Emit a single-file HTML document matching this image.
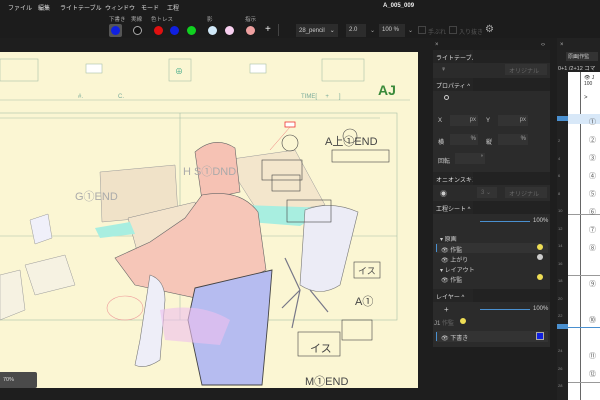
<!DOCTYPE html>
<html style="overflow:hidden;width:600px;height:400px"><head><meta charset="utf-8"><style>
*{margin:0;padding:0;box-sizing:border-box}
body{width:600px;height:400px;background:#1e1e1e;font-family:"Liberation Sans","Noto Sans CJK JP",sans-serif;color:#ccc;position:relative;overflow:hidden;font-size:6px}
.a{position:absolute;white-space:nowrap}
.dot{position:absolute;width:9px;height:9px;border-radius:50%}
.pn{position:absolute;left:433px;width:117px;background:#2b2b2b}
.hd{position:absolute;left:433px;width:117px;height:13px;background:#252525}
.hd span{position:absolute;left:3px;top:3px;color:#ddd;font-size:6px}
.hd i{position:absolute;left:40px;right:0;top:0;height:13px;background:#222}
.inp{position:absolute;background:#333;height:11px}
</style></head><body>
<div class="a" style="left:0;top:0;width:600px;height:38px;background:#1c1c1c"></div>
<div class="a" style="left:8px;top:3px;color:#ddd">ファイル</div>
<div class="a" style="left:38px;top:3px;color:#ddd">編集</div>
<div class="a" style="left:60px;top:3px;color:#ddd">ライトテーブル</div>
<div class="a" style="left:105px;top:3px;color:#ddd">ウィンドウ</div>
<div class="a" style="left:141px;top:3px;color:#ddd">モード</div>
<div class="a" style="left:167px;top:3px;color:#ddd">工程</div>
<div class="a" style="left:383px;top:3px;color:#eee;font-weight:bold">A_005_009</div>
<div class="a" style="left:109px;top:15px;color:#aaa;font-size:5.5px">下書き</div>
<div class="a" style="left:131px;top:15px;color:#aaa;font-size:5.5px">実線</div>
<div class="a" style="left:151px;top:15px;color:#aaa;font-size:5.5px">色トレス</div>
<div class="a" style="left:207px;top:15px;color:#aaa;font-size:5.5px">影</div>
<div class="a" style="left:245px;top:15px;color:#aaa;font-size:5.5px">指示</div>
<div class="a" style="left:109px;top:24px;width:13px;height:13px;background:#555;border-radius:2px"></div>
<div class="dot" style="left:111px;top:26px;background:#1020e0"></div>
<div class="dot" style="left:133px;top:26px;background:#111;border:1px solid #aaa"></div>
<div class="dot" style="left:154px;top:26px;background:#e01010"></div>
<div class="dot" style="left:170px;top:26px;background:#1020e0"></div>
<div class="dot" style="left:187px;top:26px;background:#10d020"></div>
<div class="dot" style="left:208px;top:26px;background:#d0e8f8"></div>
<div class="dot" style="left:225px;top:26px;background:#f8d0f0"></div>
<div class="dot" style="left:246px;top:26px;background:#eea0a0"></div>
<div class="a" style="left:265px;top:24px;color:#eee;font-size:10px">+</div>
<div class="a" style="left:278px;top:24px;width:1px;height:12px;background:#444"></div>
<div class="a" style="left:296px;top:24px;width:42px;height:13px;background:#2c2c2c;color:#ccc;padding:3px 3px">28_pencil &nbsp;&nbsp;⌄</div>
<div class="a" style="left:346px;top:24px;width:20px;height:13px;background:#2c2c2c;color:#ccc;padding:3px 3px">2.0</div>
<div class="a" style="left:370px;top:27px;color:#aaa">⌄</div>
<div class="a" style="left:379px;top:24px;width:26px;height:13px;background:#2c2c2c;color:#ccc;padding:3px 3px">100 %</div>
<div class="a" style="left:408px;top:27px;color:#aaa">⌄</div>
<div class="a" style="left:418px;top:26px;width:8px;height:8px;border:1px solid #444"></div>
<div class="a" style="left:428px;top:27px;color:#555">手ぶれ</div>
<div class="a" style="left:449px;top:26px;width:8px;height:8px;border:1px solid #444"></div>
<div class="a" style="left:459px;top:27px;color:#555">入り抜き</div>
<div class="a" style="left:485px;top:24px;color:#aaa;font-size:10px">⚙</div>

<div class="a" style="left:0;top:52px;width:418px;height:336px;background:#fbf6d3"></div>
<svg class="a" style="left:0;top:52px" width="418" height="336" viewBox="0 52 418 336">
<g fill="none" stroke="#a8c0a8" stroke-width="0.6">
<rect x="0" y="59" width="38" height="22"/><rect x="86" y="64" width="16" height="9" fill="#fff"/>
<rect x="169" y="59" width="22" height="22"/><rect x="250" y="64" width="16" height="9" fill="#fff"/>
<rect x="322" y="59" width="42" height="22"/>
<line x1="0" y1="100" x2="410" y2="100"/>
<rect x="-5" y="113" width="402" height="207"/>
<line x1="0" y1="118" x2="380" y2="118"/><line x1="180" y1="113" x2="180" y2="320"/>
<line x1="0" y1="236" x2="397" y2="236"/>
</g>
<text x="179" y="74" font-size="8" fill="#4a8" text-anchor="middle">⊕</text>
<text x="78" y="98" font-size="6" fill="#7a9">#.</text><text x="118" y="98" font-size="6" fill="#7a9">C.</text>
<text x="301" y="98" font-size="6" fill="#7a9">TIME[ &#160;&#160;&#160;&#160;+ &#160;&#160;&#160;&#160;&#160;]</text>
<text x="378" y="95" font-size="14" font-weight="bold" fill="#3a8a3a">AJ</text>
<polygon points="100,172 175,165 178,215 102,222" fill="#f0e2c8" stroke="#999" stroke-width="0.5"/>
<polygon points="128,218 195,202 205,250 140,262" fill="#f3e4cc" stroke="#888" stroke-width="0.5"/>
<polygon points="95,228 130,222 135,234 100,238" fill="#a8eee0"/>
<polygon points="225,160 295,150 325,205 260,215" fill="#f3e6cc" stroke="#999" stroke-width="0.5"/>
<polygon points="245,205 330,208 300,226 250,222" fill="#a8eee0"/>
<polygon points="30,220 48,214 52,238 35,244" fill="#f0f0fa" stroke="#999" stroke-width="0.5"/>
<polygon points="25,265 65,255 75,285 35,295" fill="#f6f2e2" stroke="#999" stroke-width="0.5"/>
<polygon points="0,275 20,270 25,310 0,320" fill="#f6f2e2" stroke="#999" stroke-width="0.5"/>
<path d="M305,210 Q330,200 358,212 L340,285 Q320,298 300,285 Z" fill="#ececf6" stroke="#777" stroke-width="0.6"/>
<path d="M285,258 L300,290 L282,308 M310,290 L328,312 M300,290 L292,328" stroke="#778" stroke-width="1.2" fill="none"/>
<path d="M195,152 Q215,135 235,148 L240,192 L202,200 Z" fill="#f6c2b4" stroke="#666" stroke-width="0.6"/>
<path d="M202,195 Q240,188 258,212 L266,270 L205,300 L135,285 L115,258 L150,242 L185,218 Z" fill="#f6c6b8" stroke="#666" stroke-width="0.6"/>
<path d="M165,300 Q165,280 150,275 L140,340 L135,365 Q145,370 160,360 Z" fill="#eeeef8" stroke="#777" stroke-width="0.6"/>
<path d="M195,288 L272,270 L268,320 L262,385 L202,385 L188,320 Z" fill="#b6bcf0" stroke="#444" stroke-width="0.9"/>
<path d="M160,310 Q200,302 230,320 L220,345 L165,340 Z" fill="#eec0ee" opacity="0.6"/>
<g fill="none" stroke="#444" stroke-width="0.6">
<rect x="262" y="160" width="40" height="20"/><rect x="272" y="175" width="28" height="16"/>
<rect x="287" y="200" width="44" height="22"/><rect x="332" y="150" width="57" height="12"/>
<rect x="354" y="262" width="26" height="16"/><rect x="298" y="332" width="42" height="24"/>
<rect x="342" y="320" width="30" height="20"/>
<circle cx="290" cy="143" r="8"/><circle cx="350" cy="136" r="7"/>
</g>
<g font-size="11" fill="#444"><text x="325" y="145">A上①END</text><text x="355" y="305">A①</text>
<text x="305" y="385">M①END</text><text x="310" y="352">イス</text><text x="358" y="274" font-size="9">イス</text></g>
<g font-size="11" fill="#aaa"><text x="75" y="200">G①END</text><text x="183" y="175">H S①DND</text></g>
<rect x="285" y="122" width="10" height="5" fill="#fff" stroke="#e33" stroke-width="0.8"/>
<line x1="290" y1="127" x2="270" y2="150" stroke="#e77" stroke-width="0.5"/>
<ellipse cx="125" cy="308" rx="18" ry="12" fill="none" stroke="#e99" stroke-width="0.6"/>
</svg>
<div class="a" style="left:0;top:372px;width:37px;height:16px;background:#4a4a4a;color:#ddd;font-size:5.5px;padding:5px 3px;border-radius:0 2px 2px 0">70%</div>

<div class="a" style="left:425px;top:38px;width:8px;height:362px;background:#1e1e1e"></div>
<div class="a" style="left:435px;top:42px;color:#aaa">×</div>
<div class="a" style="left:541px;top:42px;color:#aaa">‹›</div>
<div class="pn" style="top:50px;height:297px"></div>
<div class="hd" style="top:50px"><span>ライトテーブル ⌄</span><i></i></div>
<div class="a" style="left:441px;top:66px;color:#ccc;font-size:7px">♀</div>
<div class="inp" style="left:505px;top:64px;width:42px;color:#666;padding:2px 4px">オリジナル ⌄</div>
<div class="hd" style="top:78px"><span>プロパティ ^</span><i></i></div>
<div class="a" style="left:444px;top:95px;width:5px;height:5px;border:1px solid #ccc;border-radius:50%"></div>
<div class="a" style="left:438px;top:118px;color:#ccc">X</div><div class="inp" style="left:450px;top:115px;width:28px;color:#aaa;text-align:right;padding:2px">px</div>
<div class="a" style="left:486px;top:118px;color:#ccc">Y</div><div class="inp" style="left:498px;top:115px;width:30px;color:#aaa;text-align:right;padding:2px">px</div>
<div class="a" style="left:438px;top:137px;color:#ccc">横</div><div class="inp" style="left:450px;top:134px;width:28px;color:#aaa;text-align:right;padding:2px">%</div>
<div class="a" style="left:486px;top:137px;color:#ccc">縦</div><div class="inp" style="left:498px;top:134px;width:30px;color:#aaa;text-align:right;padding:2px">%</div>
<div class="a" style="left:438px;top:156px;color:#ccc">回転</div><div class="inp" style="left:455px;top:153px;width:30px;color:#aaa;text-align:right;padding:2px">°</div>
<div class="hd" style="top:172px"><span>オニオンスキン ⌄</span><i></i></div>
<div class="a" style="left:440px;top:189px;color:#ccc;font-size:7px">◉</div>
<div class="inp" style="left:477px;top:187px;width:20px;color:#666;padding:2px 4px">3 ⌄</div>
<div class="inp" style="left:505px;top:187px;width:42px;color:#666;padding:2px 4px">オリジナル ⌄</div>
<div class="hd" style="top:201px"><span>工程シート ^</span><i></i></div>
<div class="a" style="left:480px;top:221px;width:50px;height:1px;background:#4a90d0"></div>
<div class="a" style="left:533px;top:218px;color:#ccc">100%</div>
<div class="a" style="left:440px;top:234px;color:#ccc">▾ 原画</div>
<div class="a" style="left:436px;top:243px;width:112px;height:10px;background:#333"></div>
<div class="a" style="left:436px;top:244px;width:1px;height:8px;background:#4a90d0"></div>
<div class="a" style="left:441px;top:245px;color:#ccc">👁 作監</div><div class="dot" style="left:537px;top:244px;width:6px;height:6px;background:#eedd55"></div>
<div class="a" style="left:441px;top:255px;color:#ccc">👁 上がり</div><div class="dot" style="left:537px;top:254px;width:6px;height:6px;background:#ccc"></div>
<div class="a" style="left:440px;top:265px;color:#ccc">▾ レイアウト</div>
<div class="a" style="left:441px;top:275px;color:#ccc">👁 作監</div><div class="dot" style="left:537px;top:274px;width:6px;height:6px;background:#eedd55"></div>
<div class="hd" style="top:289px"><span>レイヤー ^</span><i></i></div>
<div class="a" style="left:444px;top:305px;color:#ccc;font-size:8px">+</div>
<div class="a" style="left:480px;top:309px;width:50px;height:1px;background:#4a90d0"></div>
<div class="a" style="left:533px;top:306px;color:#ccc">100%</div>
<div class="a" style="left:434px;top:318px;color:#aaa">J1 <span style="color:#666">作監</span></div><div class="dot" style="left:460px;top:318px;width:6px;height:6px;background:#eedd55"></div>
<div class="a" style="left:436px;top:331px;width:112px;height:11px;background:#333"></div>
<div class="a" style="left:436px;top:332px;width:1px;height:9px;background:#4a90d0"></div>
<div class="a" style="left:441px;top:333px;color:#ccc">👁 下書き</div>
<div class="a" style="left:536px;top:332px;width:8px;height:8px;background:#1020e0;border:1px solid #aaa"></div>

<div class="a" style="left:550px;top:38px;width:7px;height:362px;background:#1e1e1e"></div>
<div class="a" style="left:557px;top:38px;width:43px;height:362px;background:#222;overflow:hidden">
<div class="a" style="left:3px;top:4px;color:#aaa">×</div>
<div class="a" style="left:9px;top:14px;width:32px;height:9px;background:#333;color:#ccc;font-size:5px;padding:1px 2px">原画|作監</div>
<div class="a" style="left:1px;top:26px;color:#ccc;font-size:5.5px">0+1 /2+12 コマ</div>
<div class="a" style="left:11px;top:34px;width:32px;height:330px;background:#fff"></div>
<div class="a" style="left:23px;top:34px;width:1px;height:330px;background:#666"></div>
<div class="a" style="left:0;top:78px;width:11px;height:5px;background:#4a90d0"></div>
<div class="a" style="left:11px;top:76px;width:32px;height:10px;background:#d8e8f8"></div>
<div class="a" style="left:0;top:286px;width:11px;height:5px;background:#4a90d0"></div>
<div class="a" style="left:11px;top:289px;width:32px;height:1px;background:#4a90d0"></div>
<div class="a" style="left:11px;top:176px;width:32px;height:1px;background:#999"></div>
<div class="a" style="left:11px;top:237px;width:32px;height:1px;background:#999"></div>
<div class="a" style="left:11px;top:344px;width:32px;height:1px;background:#999"></div>
<div class="a" style="left:27px;top:37px;color:#333;font-size:5px">👁 J<br>100</div>
<div class="a" style="left:27px;top:57px;color:#333">&gt;</div>
<div class="a" style="left:32px;top:76px;color:#555;font-size:7px;line-height:18px">①<br>②<br>③<br>④<br>⑤<br>⑥<br>⑦<br>⑧<br><br>⑨<br><br>⑩<br><br>⑪<br>⑫</div>
<div class="a" style="left:1px;top:94px;color:#888;font-size:4px;line-height:17.5px">2<br>4<br>6<br>8<br>10<br>12<br>14<br>16<br>18<br>20<br>22<br><br>24<br>26<br>28<br>30</div>
</div>
</body></html>
